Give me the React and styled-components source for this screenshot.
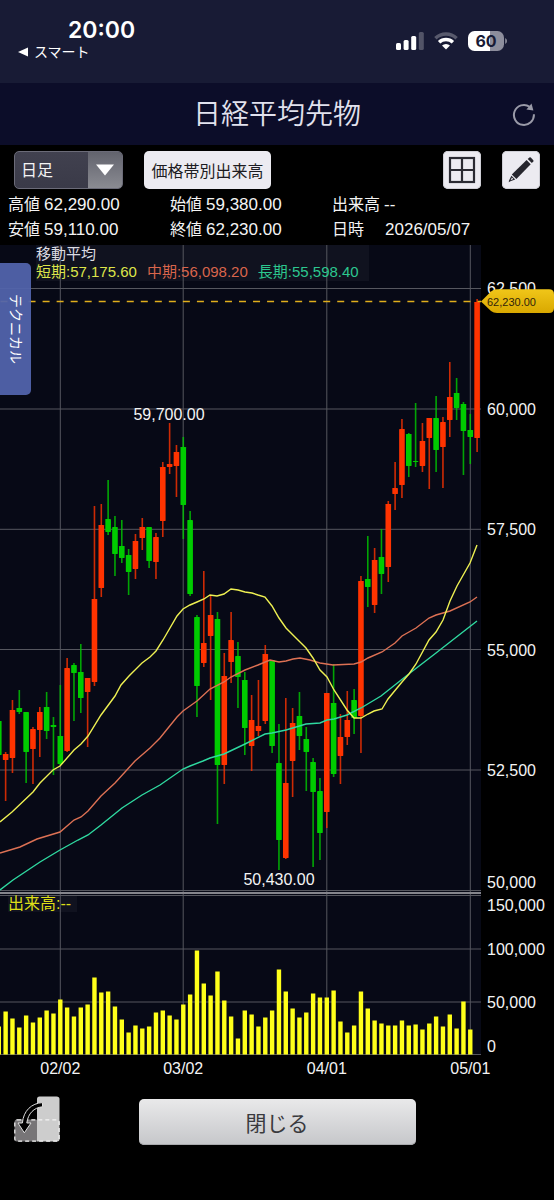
import { useState } from 'react';
import styled, { createGlobalStyle } from 'styled-components';

// [high, body top, body bottom, low, direction] in plot units
const candles = [
    [721, 721, 755, 756, 'down'],
    [752, 754, 760, 801, 'up'],
    [700, 710, 758, 773, 'up'],
    [690, 708, 712, 714, 'down'],
    [712, 712, 752, 783, 'down'],
    [727, 729, 749, 784, 'up'],
    [707, 712, 730, 757, 'up'],
    [692, 707, 731, 739, 'down'],
    [717, 725, 727, 775, 'down'],
    [685, 736, 764, 765, 'down'],
    [658, 668, 751, 752, 'up'],
    [663, 665, 673, 721, 'down'],
    [644, 672, 698, 713, 'down'],
    [678, 678, 692, 747, 'up'],
    [506, 599, 682, 686, 'up'],
    [504, 525, 588, 597, 'up'],
    [480, 519, 532, 535, 'down'],
    [516, 527, 554, 576, 'down'],
    [520, 546, 558, 563, 'down'],
    [549, 555, 572, 595, 'down'],
    [534, 541, 569, 579, 'up'],
    [518, 527, 538, 550, 'up'],
    [527, 527, 561, 568, 'down'],
    [533, 537, 562, 579, 'up'],
    [462, 467, 521, 537, 'up'],
    [423, 464, 467, 474, 'up'],
    [445, 452, 466, 497, 'up'],
    [437, 447, 505, 539, 'down'],
    [511, 520, 594, 596, 'down'],
    [615, 617, 686, 717, 'down'],
    [571, 643, 663, 667, 'up'],
    [595, 615, 636, 700, 'up'],
    [612, 619, 765, 824, 'down'],
    [653, 676, 765, 784, 'up'],
    [612, 640, 662, 683, 'up'],
    [642, 656, 677, 708, 'down'],
    [672, 680, 728, 755, 'down'],
    [695, 720, 746, 771, 'up'],
    [680, 726, 731, 736, 'up'],
    [645, 654, 721, 724, 'up'],
    [660, 660, 746, 753, 'down'],
    [724, 763, 840, 870, 'down'],
    [698, 783, 858, 859, 'up'],
    [708, 723, 761, 797, 'up'],
    [692, 716, 736, 750, 'down'],
    [727, 739, 752, 791, 'down'],
    [758, 762, 792, 867, 'down'],
    [778, 791, 833, 860, 'down'],
    [693, 693, 812, 828, 'up'],
    [664, 703, 774, 777, 'down'],
    [714, 737, 756, 784, 'up'],
    [691, 720, 737, 745, 'up'],
    [689, 700, 718, 734, 'down'],
    [576, 581, 716, 753, 'up'],
    [536, 579, 587, 607, 'down'],
    [548, 560, 605, 613, 'up'],
    [529, 557, 574, 594, 'down'],
    [501, 504, 567, 582, 'up'],
    [462, 488, 494, 510, 'up'],
    [419, 429, 485, 498, 'up'],
    [433, 434, 466, 477, 'down'],
    [403, 461, 462, 467, 'down'],
    [423, 441, 466, 472, 'up'],
    [418, 418, 438, 489, 'up'],
    [396, 418, 450, 472, 'down'],
    [417, 422, 447, 488, 'up'],
    [362, 397, 420, 437, 'up'],
    [378, 393, 408, 420, 'down'],
    [402, 404, 431, 475, 'down'],
    [414, 430, 437, 464, 'down'],
    [299, 302, 438, 452, 'up'],
];

const volumes = [
    28, 43, 36, 27, 39, 32, 37, 44, 41, 55, 47, 38, 47, 50, 77, 62, 63, 48,
    35, 22, 29, 26, 28, 42, 44, 39, 35, 50, 60, 104, 71, 59, 83, 54, 38, 16,
    44, 40, 28, 37, 44, 85, 63, 46, 37, 42, 61, 57, 57, 64, 33, 22, 29, 63,
    46, 34, 31, 29, 29, 34, 29, 30, 25, 31, 38, 28, 40, 26, 53, 25,
];

const averages = [
    {
        color: '#2fd9a0',
        points: '0,890 13,880 40,862 60,850 78,840 88,835 101,825 122,808 142,795 160,785 183,769 190,766 203,761 210,758 224,754 245,744 265,734 272,733 286,730 306,724 320,723 327,720 334,719 347,715 361,708 381,696 410,673 436,653 477,621',
    },
    {
        color: '#dd7154',
        points: '0,853 20,847 37,839 60,832 74,820 81,817 88,811 101,796 115,783 135,761 150,748 160,738 177,717 183,711 197,701 210,689 224,682 231,677 245,670 258,665 270,660 279,662 286,661 293,659 300,658 310,660 320,663 333,665 354,664 361,662 368,658 382,652 395,643 402,636 416,628 429,618 436,615 450,611 470,602 477,597',
    },
    {
        color: '#eef052',
        points: '0,822 12,812 33,792 40,783 53,770 60,766 74,750 81,744 88,736 101,715 115,696 121,685 129,676 142,663 150,657 156,651 163,640 177,616 183,609 190,605 197,602 204,599 210,595 217,596 224,594 231,589 238,590 245,592 252,593 258,595 265,597 272,606 279,618 286,628 299,641 306,648 313,658 320,670 327,677 334,690 347,710 354,718 361,718 368,714 374,711 382,709 388,699 402,682 409,674 416,664 429,640 436,632 443,620 450,601 457,586 470,563 477,545',
    },
];

const priceLabels = [
    ['62,500', 294],
    ['60,000', 415],
    ['57,500', 535],
    ['55,000', 656],
    ['52,500', 776],
    ['50,000', 888],
    ['150,000', 911],
    ['100,000', 955],
    ['50,000', 1008],
    ['0', 1052],
];

const gridRows = [288.5, 409, 529.3, 649.5, 770, 890.5, 895.5, 949, 1002];

const dateLabels = [
    ['02/02', 60.3],
    ['03/02', 183.2],
    ['04/01', 326.8],
    ['05/01', 470.3],
];

const colors = { up: '#ff3300', down: '#00cc00' };
const BASELINE = 1054.5;

function xOf (index) {
    return -1.2 + index * 6.833;
}

function StatusBar () {
    return (
        <StatusContainer>
            <Clock>
                <Time>20:00</Time>
                <BackLink href='#'>
                    <svg width='10' height='10' viewBox='0 0 10 10'>
                        <path d='M0 5L10 0.5V9.5Z' fill='#fff' />
                    </svg>
                    スマート
                </BackLink>
            </Clock>
            <StatusIcons>
                <svg width='28' height='20' viewBox='0 0 28 20' fill='#fff'>
                    <rect x='0' y='12' width='5' height='7' rx='1.5' />
                    <rect x='7.6' y='9' width='5' height='10' rx='1.5' />
                    <rect x='15.2' y='5' width='5' height='14' rx='1.5' />
                    <rect x='22.8' y='1' width='5' height='18' rx='1.5' opacity='0.25' />
                </svg>
                <svg width='24' height='20' viewBox='0 0 24 20' fill='none' strokeWidth='3.4'>
                    <path d='M1.4 7.2A15.4 15.4 0 0 1 22.6 7.2' stroke='#fff' opacity='0.28' />
                    <path d='M5.1 11.2A10 10 0 0 1 18.9 11.2' stroke='#fff' />
                    <path d='M12 18.6L8 14.6A5.7 5.7 0 0 1 16 14.6Z' fill='#fff' />
                </svg>
                <svg width='40' height='20' viewBox='0 0 40 20'>
                    <path d='M6.5 0H22V20H6.5A6.5 6.5 0 0 1 0 13.5V6.5A6.5 6.5 0 0 1 6.5 0Z' fill='#fff' />
                    <path d='M22 0H29.5A6.5 6.5 0 0 1 36 6.5V13.5A6.5 6.5 0 0 1 29.5 20H22Z' fill='#8d8e9d' />
                    <path d='M37.2 7V13A3.4 3.4 0 0 0 37.2 7Z' fill='#8d8e9d' />
                    <BatteryText x='18' y='16'>60</BatteryText>
                </svg>
            </StatusIcons>
        </StatusContainer>
    );
}

function Toolbar () {
    const [period, setPeriod] = useState('日足');

    return (
        <ToolbarContainer>
            <SelectBox>
                <select aria-label='足種' value={period} onChange={e => setPeriod(e.target.value)}>
                    <option>日足</option>
                    <option>週足</option>
                    <option>月足</option>
                </select>
                <SelectArrow>
                    <svg width='18' height='12' viewBox='0 0 18 12'>
                        <path d='M0 0.5H18L9 11.5Z' fill='#fff' />
                    </svg>
                </SelectArrow>
            </SelectBox>
            <VolumeButton>価格帯別出来高</VolumeButton>
            <IconButtons>
                <IconButton aria-label='分割表示'>
                    <svg width='28' height='28' viewBox='0 0 28 28' fill='none' stroke='#2b2b33'>
                        <rect x='2' y='2' width='24' height='24' strokeWidth='2.2' />
                        <path d='M14 2V26M2 14H26' strokeWidth='2.2' />
                    </svg>
                </IconButton>
                <IconButton aria-label='描画'>
                    <svg width='28' height='28' viewBox='0 0 28 28' fill='#26262e'>
                        <path d='M19.6 4.1L23.7 8.2L9.4 22.9L4.8 18.6Z' />
                        <path d='M20.7 3L22.4 1.4Q23.1 0.9 23.8 1.5L26.3 4.2Q26.8 4.9 26.3 5.5L24.8 7.1Z' />
                        <path d='M4.4 19.7L8.2 23.5L3.4 25.3L1.8 26.2L1.9 24.8Z' />
                        <path d='M4.9 21.6L6.4 23.1L3.6 24.2Z' fill='#ecebf1' />
                    </svg>
                </IconButton>
            </IconButtons>
        </ToolbarContainer>
    );
}

function Candle ({ x, data }) {
    const [high, top, bottom, low, direction] = data;
    return (
        <g fill={colors[direction]}>
            <rect x={x - 0.8} y={high} width='1.6' height={low - high} opacity='0.8' />
            <rect x={x - 2.8} y={top} width='5.6' height={bottom - top} rx='0.4' />
        </g>
    );
}

function Chart () {
    return (
        <ChartContainer>
            <ChartSvg viewBox='0 245 554 835'>
                <defs>
                    <linearGradient id='tag' x1='0' y1='0' x2='0' y2='1'>
                        <stop offset='0' stopColor='#f0c619' />
                        <stop offset='1' stopColor='#d9a800' />
                    </linearGradient>
                    <clipPath id='plot'>
                        <rect x='0' y='245' width='481' height='811' />
                    </clipPath>
                </defs>
                <rect x='0' y='245' width='481' height='810' fill='#070916' />
                <rect x='36' y='245' width='333' height='36' fill='#10121f' />
                <rect x='8' y='896' width='69' height='16' fill='#10121f' />
                <g stroke='#56575f' strokeWidth='1'>
                    {gridRows.map(y => <path key={y} d={`M0 ${y}H481`} />)}
                    {dateLabels.map(([label, x]) => <path key={label} d={`M${x} 245V${BASELINE}`} />)}
                    <path d={`M0 ${BASELINE}H481`} />
                </g>
                <path d='M0 893H481' stroke='#85858c' strokeWidth='2' />
                <g clipPath='url(#plot)'>
                    {candles.map((data, index) => (
                        <Candle key={index} x={xOf(index)} data={data} />
                    ))}
                    {averages.map(({ color, points }) => (
                        <polyline key={color} points={points} fill='none' stroke={color} strokeWidth='1.4' />
                    ))}
                    {volumes.map((height, index) => (
                        <rect
                            key={index}
                            x={xOf(index) - 2.2}
                            y={BASELINE - height}
                            width='4.4'
                            height={height}
                            fill='#ffff1a'
                        />
                    ))}
                </g>
                <path d='M0.5 301.5H481' stroke='#e0ae1c' strokeWidth='1.4' strokeDasharray='7 7.03' />
                <ChartText x='169' y='420' $anchor='middle'>59,700.00</ChartText>
                <ChartText x='279' y='885' $anchor='middle'>50,430.00</ChartText>
                {priceLabels.map(([label, y]) => (
                    <ChartText key={y} x='487' y={y}>{label}</ChartText>
                ))}
                {dateLabels.map(([label, x]) => (
                    <ChartText key={label} x={x} y='1074' $anchor='middle'>{label}</ChartText>
                ))}
                <path
                    d='M481 301.5L491 291.5Q493.5 289.3 497 289.3H549Q554 289.3 554 294.3V308Q554 313 549 313H497Q493.5 313 491 311Z'
                    fill='url(#tag)'
                />
                <TagText x='487' y='306'>62,230.00</TagText>
            </ChartSvg>
            <Legend>
                <LegendTitle>移動平均</LegendTitle>
                <LegendValues>
                    <LegendItem $color='#dde54a'>短期:57,175.60</LegendItem>
                    <LegendItem $color='#d9654c'>中期:56,098.20</LegendItem>
                    <LegendItem $color='#2cc78f'>長期:55,598.40</LegendItem>
                </LegendValues>
            </Legend>
            <VolumeLegend>出来高:--</VolumeLegend>
            <TechnicalTab>テクニカル</TechnicalTab>
        </ChartContainer>
    );
}

export default function App () {
    return (
        <Page>
            <GlobalStyle />
            <StatusBar />
            <Header>
                <h1>日経平均先物</h1>
                <RefreshButton aria-label='更新'>
                    <svg width='24' height='24' viewBox='0 0 24 24' fill='none'>
                        <path d='M17.6 3.7A10 10 0 1 0 21.9 11.2' stroke='#9a9aa8' strokeWidth='2' />
                        <path d='M19.5 0.6L21.4 7.6L14.4 6.6Z' fill='#9a9aa8' />
                    </svg>
                </RefreshButton>
            </Header>
            <Toolbar />
            <Quotes>
                <Quote><dt>高値</dt><dd>62,290.00</dd></Quote>
                <Quote><dt>始値</dt><dd>59,380.00</dd></Quote>
                <Quote><dt>出来高</dt><dd>--</dd></Quote>
                <Quote><dt>安値</dt><dd>59,110.00</dd></Quote>
                <Quote><dt>終値</dt><dd>62,230.00</dd></Quote>
                <Quote $wide><dt>日時</dt><dd>2026/05/07</dd></Quote>
            </Quotes>
            <Chart />
            <Footer>
                <RotateButton aria-label='画面回転'>
                    <svg width='46' height='46' viewBox='0 0 46 46'>
                        <rect x='0.5' y='23.5' width='24' height='22' rx='2.5' fill='#777577' />
                        <path d='M23 3Q23 0.5 25.5 0.5H42.5Q45.5 0.5 45.5 3V43Q45.5 45.5 43 45.5H23Z' fill='#cdcdcd' />
                        <rect x='0.8' y='23.8' width='44.4' height='21.4' rx='2.5' fill='none' stroke='#f4f4f4' strokeWidth='1.2' strokeDasharray='4 3' />
                        <path
                            d='M28.5 6.6V10.8C20 11.5 14 17.5 12.8 27H17L10.3 36.8L4 27H8.4C9.4 14.8 17.5 7.2 28.5 6.6Z'
                            fill='#000'
                            stroke='#dedede'
                            strokeWidth='1'
                        />
                    </svg>
                </RotateButton>
                <CloseButton>閉じる</CloseButton>
            </Footer>
        </Page>
    );
}

const GlobalStyle = createGlobalStyle`
    * {
        box-sizing: border-box;
    }

    body {
        margin: 0;
        background: #000;
        font-family: 'Liberation Sans', 'Noto Sans CJK JP', sans-serif;
    }

    button, select {
        margin: 0;
        padding: 0;
        border: none;
        font-family: inherit;
        cursor: pointer;
    }
`;

const Page = styled.div`
    min-height: 100vh;
    background: #000;
    color: #f4f4f4;
`;

const StatusContainer = styled.div`
    height: 83px;
    padding: 16px 46px 0 18px;
    background: #181b35;

    display: flex;
    justify-content: space-between;
`;

const Clock = styled.div`
    display: flex;
    flex-direction: column;
`;

const Time = styled.div`
    padding-left: 50px;
    color: #fff;
    font-family: Inter, sans-serif;
    font-size: 23px;
    font-weight: 600;
    line-height: 28px;
`;

const BackLink = styled.a`
    display: flex;
    align-items: center;
    gap: 6px;
    color: #fff;
    font-size: 14px;
    line-height: 16px;
    text-decoration: none;
`;

const StatusIcons = styled.div`
    padding-top: 15px;
    display: flex;
    align-items: flex-start;
    gap: 10px;
`;

const BatteryText = styled.text`
    fill: #181b35;
    font-family: Inter, sans-serif;
    font-size: 16px;
    font-weight: 700;
    text-anchor: middle;
`;

const Header = styled.header`
    height: 62px;
    padding: 2px 18px 0;
    background: #0c0d29;

    display: grid;
    grid-template-columns: 1fr auto 1fr;
    align-items: center;

    > h1 {
        grid-column: 2;
        margin: 0;
        color: #e2e2ee;
        font-size: 28px;
        font-weight: 350;
        line-height: 40px;
    }
`;

const RefreshButton = styled.button`
    justify-self: end;
    display: flex;
    background: none;
`;

const ToolbarContainer = styled.div`
    padding: 6px 14px 2px;
    display: flex;
    align-items: center;
    gap: 21px;
`;

const SelectBox = styled.label`
    position: relative;
    width: 109px;
    height: 38px;

    > select {
        width: 100%;
        height: 100%;
        padding-left: 6px;
        appearance: none;
        border: 1px solid #6b6b78;
        border-radius: 5px;
        background: linear-gradient(#41414f, #3a3a48);
        color: #f4f4f4;
        font-size: 16px;
    }
`;

const SelectArrow = styled.span`
    position: absolute;
    top: 1px;
    right: 1px;
    bottom: 1px;
    width: 34px;
    border-radius: 0 4px 4px 0;
    background: linear-gradient(#62636d, #8a8b92);
    pointer-events: none;

    display: flex;
    align-items: center;
    justify-content: center;
`;

const VolumeButton = styled.button`
    width: 127px;
    height: 38px;
    border-radius: 5px;
    background: #ecebf1;
    color: #1c1c22;
    font-size: 16px;
    white-space: nowrap;
`;

const IconButtons = styled.div`
    margin-left: auto;
    display: flex;
    gap: 21px;
`;

const IconButton = styled.button`
    width: 38px;
    height: 38px;
    border-radius: 5px;
    background: #ecebf1;
    box-shadow: inset 0 0 0 1px #cfcfd6;

    display: flex;
    align-items: center;
    justify-content: center;
`;

const Quotes = styled.dl`
    margin: 0;
    padding: 1px 60px 3px 8px;
    display: grid;
    grid-template-columns: repeat(3, 1fr);
    line-height: 25px;
    font-size: 17px;
`;

const Quote = styled.div`
    display: flex;
    gap: ${props => props.$wide ? '21px' : '4px'};
    white-space: nowrap;

    > dt {
        font-size: 16px;
    }

    > dd {
        margin: 0;
    }
`;

const ChartContainer = styled.div`
    position: relative;
`;

const ChartSvg = styled.svg`
    display: block;
    width: 100%;
`;

const ChartText = styled.text`
    fill: #f4f4f4;
    font-size: 16px;
    text-anchor: ${props => props.$anchor || 'start'};
`;

const TagText = styled.text`
    fill: #30240a;
    font-size: 11px;
`;

const Legend = styled.div`
    position: absolute;
    top: 0;
    left: 36px;
    font-size: 15px;
    line-height: 18px;
`;

const LegendTitle = styled.div`
    color: #dcdce2;
`;

const LegendValues = styled.div`
    display: flex;
    gap: 10px;
`;

const LegendItem = styled.span`
    color: ${props => props.$color};
    white-space: nowrap;
`;

const VolumeLegend = styled.div`
    position: absolute;
    top: 78%;
    left: 8px;
    color: #dede18;
    font-size: 16px;
    line-height: 16px;
`;

const TechnicalTab = styled.button`
    position: absolute;
    top: 18px;
    left: 0;
    width: 31px;
    height: 132px;
    border-radius: 0 5px 5px 0;
    background: rgba(82, 100, 172, 0.94);
    color: #fff;
    font-size: 14px;
    line-height: 31px;
    writing-mode: vertical-rl;
    text-orientation: sideways;
`;

const Footer = styled.footer`
    padding: 16px 14px 52px;
    display: grid;
    grid-template-columns: 1fr 277px 1fr;
    align-items: center;
`;

const RotateButton = styled.button`
    justify-self: start;
    display: flex;
    padding-bottom: 6px;
    background: none;
`;

const CloseButton = styled.button`
    height: 46px;
    border-radius: 5px;
    background: linear-gradient(#e9e9ea, #c6c7ca);
    box-shadow: inset 0 -1px 0 #a9aaad;
    color: #3a3a3e;
    font-size: 21px;
`;
